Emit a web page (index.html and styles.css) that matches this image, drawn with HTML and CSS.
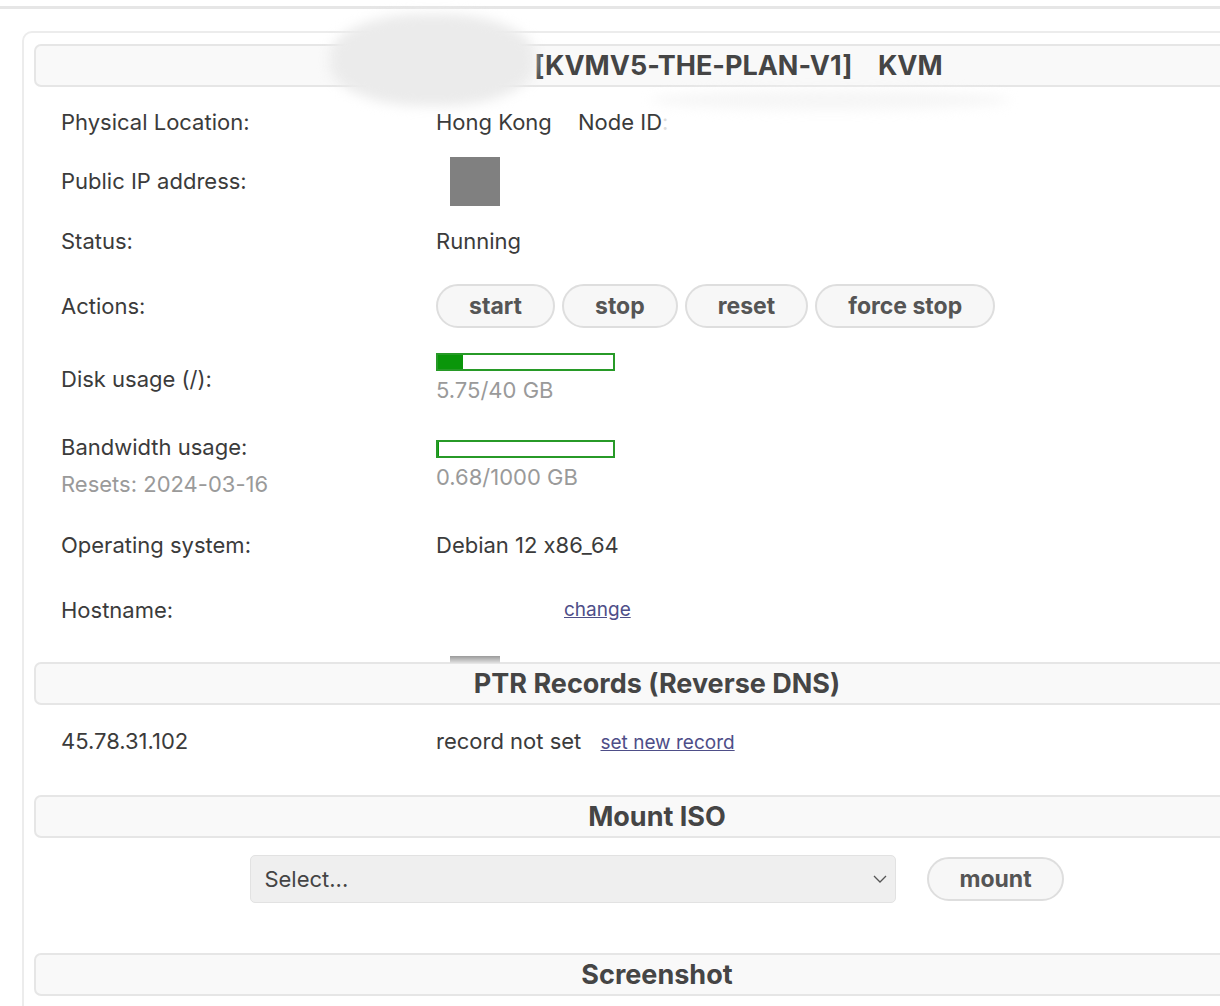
FILE: index.html
```html
<!DOCTYPE html>
<html>
<head>
<meta charset="utf-8">
<link rel="stylesheet" href="styles.css">
</head>
<body>
<div class="page">
  <div class="topline"></div>
  <div class="card">
    <div class="section-head"><span class="hidden-prefix"></span><span class="title-text">[KVMV5-THE-PLAN-V1]    KVM</span></div>
    <div class="info">
      <div class="label">Physical Location:</div>
      <div class="value">Hong Kong <span class="node">Node ID<span class="fade">:</span></span></div>

      <div class="label">Public IP address:</div>
      <div class="value"><div class="ip-box"></div></div>

      <div class="label">Status:</div>
      <div class="value">Running</div>

      <div class="label">Actions:</div>
      <div class="value actions">
        <button class="btn">start</button><button class="btn">stop</button><button class="btn">reset</button><button class="btn">force stop</button>
      </div>

      <div class="label">Disk usage (/):</div>
      <div class="value">
        <div class="bar"><div class="bar-fill" style="width:14.4%"></div></div>
        <div class="muted">5.75/40 GB</div>
      </div>

      <div class="label">Bandwidth usage:<div class="muted resets">Resets: 2024-03-16</div></div>
      <div class="value">
        <div class="bar"><div class="bar-fill" style="width:0.07%"></div></div>
        <div class="muted">0.68/1000 GB</div>
      </div>

      <div class="label">Operating system:</div>
      <div class="value">Debian 12 x86_64</div>

      <div class="label">Hostname:</div>
      <div class="value hostname"><span class="host-blur"></span><a class="link small" href="#">change</a></div>
    </div>

    <div class="section-head">PTR Records (Reverse DNS)</div>
    <div class="ptr-row">
      <div class="ptr-ip">45.78.31.102</div>
      <div class="ptr-val">record not set <a class="link small" href="#">set new record</a></div>
    </div>

    <div class="section-head">Mount ISO</div>
    <div class="mount-row">
      <div class="select-wrap">
        <select class="select"><option>Select...</option></select>
        <svg class="chev" width="14" height="10" viewBox="0 0 14 10"><path d="M1 2 L7 8 L13 2" fill="none" stroke="#555" stroke-width="1.3"/></svg>
      </div>
      <button class="btn">mount</button>
    </div>

    <div class="section-head">Screenshot</div>
    <div class="shot-body"></div>
  </div>
  <div class="blob blob-title"></div>
  <div class="blob blob-under"></div>
  <div class="smear"></div>
</div>
</body>
</html>
```

FILE: styles.css
```css
html, body {
  margin: 0;
  padding: 0;
  overflow: hidden;
  background: #fff;
}
body {
  font-family: Inter, Roboto, sans-serif;
  font-feature-settings: "calt" 0;
  color: #3b3b3b;
  font-size: 22px;
}
.page {
  position: relative;
  width: 1300px;
  height: 1006px;
  overflow: hidden;
}
.topline {
  margin-top: 6px;
  border-top: 3px solid #e6e6e6;
}
.card {
  box-sizing: border-box;
  width: 1270px;
  margin: 22px 0 0 22px;
  border: 2px solid #ececec;
  border-radius: 10px;
  padding: 11px 10px 40px 10px;
}
.section-head {
  box-sizing: border-box;
  height: 43px;
  border: 2px solid #e6e6e6;
  border-radius: 7px;
  background: #f9f9f9;
  text-align: center;
  font-weight: 700;
  font-size: 27px;
  line-height: 39px;
  color: #454545;
  white-space: pre;
}
.hidden-prefix {
  display: inline-block;
  width: 163px;
}
.info {
  display: grid;
  grid-template-columns: 375px 1fr;
  grid-template-rows: 50px 68px 52px 78px 68px 105px 54px 76px;
  padding-left: 27px;
  margin-top: 10px;
  margin-bottom: 14px;
}
.label, .value {
  align-self: center;
  line-height: 30px;
}
.label .resets {
  margin-top: 7px;
}
.muted {
  color: #9a9a9a;
}
.node {
  margin-left: 20px;
}
.fade {
  color: #ddd;
}
.ip-box {
  width: 50px;
  height: 49px;
  background: #808080;
  margin-left: 14px;
}
.actions {
  display: flex;
  gap: 7px;
}
.btn {
  box-sizing: border-box;
  height: 44px;
  padding: 0 31px;
  border: 2px solid #dedede;
  border-radius: 22px;
  background: #f7f7f7;
  font-family: Inter, Roboto, sans-serif;
  font-weight: 700;
  font-size: 23px;
  color: #555;
}
.bar {
  box-sizing: border-box;
  width: 179px;
  height: 18px;
  border: 2px solid #279a27;
  background: #fff;
  margin-bottom: 4px;
}
.bar-fill {
  height: 100%;
  background: #0a960a;
}
.hostname {
  display: flex;
  align-items: center;
}
.host-blur {
  display: inline-block;
  width: 128px;
}
.link {
  color: #4e4e88;
  text-decoration: underline;
}
.small {
  font-size: 19px;
}
.ptr-row {
  display: grid;
  grid-template-columns: 375px 1fr;
  padding: 21px 0 37px 27px;
  line-height: 30px;
}
.ptr-val .link {
  margin-left: 13px;
}
.mount-row {
  display: flex;
  justify-content: center;
  align-items: center;
  gap: 31px;
  padding: 17px 0 50px 0;
}
.mount-row .btn {
  padding: 0 30px;
}
.select-wrap {
  position: relative;
}
.select {
  box-sizing: border-box;
  width: 646px;
  height: 48px;
  appearance: none;
  -webkit-appearance: none;
  border: 1.5px solid #e2e2e2;
  border-radius: 5px;
  background: #efefef;
  font-family: Inter, Roboto, sans-serif;
  font-size: 22px;
  color: #444;
  padding: 0 13px;
}
.chev {
  position: absolute;
  right: 9px;
  top: 19px;
}
.shot-body {
  height: 40px;
}
.blob {
  position: absolute;
  border-radius: 50%;
  filter: blur(6px);
}
.blob-title {
  left: 330px;
  top: 14px;
  width: 205px;
  height: 92px;
  background: #ebebeb;
  border-radius: 45%;
}
.blob-under {
  left: 650px;
  top: 90px;
  width: 360px;
  height: 20px;
  background: #f6f6f6;
}
.smear {
  position: absolute;
  left: 450px;
  top: 656px;
  width: 50px;
  height: 7px;
  background: linear-gradient(#9a9a9a, #e0e0e0);
}
```
